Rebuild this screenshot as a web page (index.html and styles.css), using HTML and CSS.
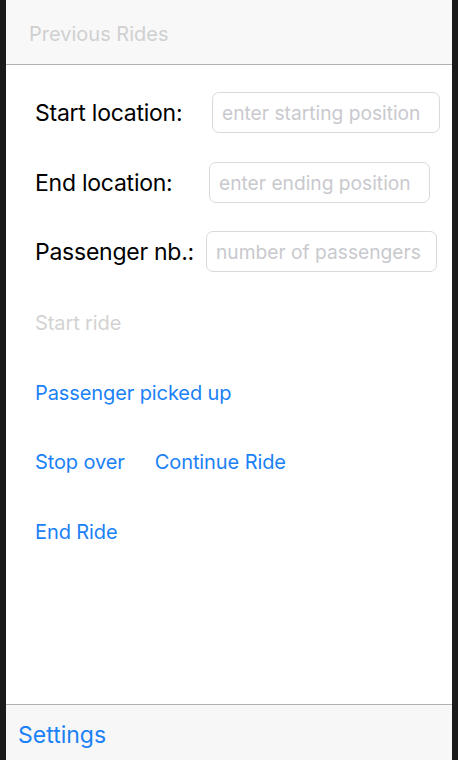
FILE: index.html
```html
<!DOCTYPE html>
<html>
<head>
<meta charset="utf-8">
<link rel="stylesheet" href="styles.css">
</head>
<body>
<div class="phone">
  <header class="navbar">
    <span class="nav-title">Previous Rides</span>
  </header>
  <main class="content">
    <div class="row row--start">
      <label class="label">Start location:</label>
      <input class="field" type="text" placeholder="enter starting position">
    </div>
    <div class="row row--end">
      <label class="label">End location:</label>
      <input class="field" type="text" placeholder="enter ending position">
    </div>
    <div class="row row--pass">
      <label class="label">Passenger nb.:</label>
      <input class="field" type="text" placeholder="number of passengers">
    </div>
    <div class="actions">
      <div class="action"><span class="btn btn--disabled">Start ride</span></div>
      <div class="action"><span class="btn">Passenger picked up</span></div>
      <div class="action action--pair"><span class="btn">Stop over</span><span class="btn">Continue Ride</span></div>
      <div class="action"><span class="btn">End Ride</span></div>
    </div>
  </main>
  <footer class="toolbar">
    <span class="btn btn--toolbar">Settings</span>
  </footer>
</div>
</body>
</html>
```
FILE: styles.css
```css
* { box-sizing: border-box; }
html, body { margin: 0; padding: 0; }
body {
  background: #1a1a1a;
  font-family: "Inter", "Roboto", "Liberation Sans", sans-serif;
  width: 458px;
  height: 760px;
  overflow: hidden;
}
.phone {
  margin: 0 6px;
  width: 446px;
  height: 760px;
  background: #fff;
  display: flex;
  flex-direction: column;
}
.navbar {
  height: 65px;
  background: #f8f8f8;
  border-bottom: 1px solid #b2b2b2;
  display: flex;
  align-items: center;
  padding-left: 23px;
  padding-top: 3px;
  flex: none;
}
.nav-title {
  font-size: 20px;
  color: #d0d0d0;
}
.content {
  flex: 1;
  padding-top: 27px;
  display: flex;
  flex-direction: column;
}
.row {
  display: flex;
  align-items: center;
  height: 41px;
  padding-left: 29px;
}
.row--end { margin-top: 29px; }
.row--pass { margin-top: 28px; }
.label {
  font-size: 23px;
  color: #000;
  letter-spacing: -0.25px;
  flex: none;
}
.row--start .label { width: 177px; }
.row--end .label { width: 174px; }
.row--pass .label { width: 171px; }
.field {
  height: 41px;
  border: 1px solid #dadada;
  border-radius: 7px;
  padding: 0 9px;
  font-family: inherit;
  font-size: 19.2px;
  color: #000;
  background: #fff;
  outline: none;
  flex: none;
}
.field::placeholder { color: #c9c9ce; }
.row--start .field { width: 228px; }
.row--end .field { width: 221px; }
.row--pass .field { width: 231px; }
.actions {
  margin-top: 31px;
  display: flex;
  flex-direction: column;
  gap: 29.7px;
  padding-left: 29px;
}
.action {
  height: 40px;
  display: flex;
  align-items: center;
  gap: 30px;
}
.btn {
  font-size: 20px;
  color: #1b81f6;
  letter-spacing: -0.1px;
}
.btn--disabled { color: #d3d3d3; }
.toolbar {
  height: 56px;
  flex: none;
  background: #f7f7f7;
  border-top: 1px solid #b2b2b2;
  display: flex;
  align-items: center;
  padding-left: 12px;
  padding-top: 5px;
}
.btn--toolbar { font-size: 23px; letter-spacing: 0; }
```
